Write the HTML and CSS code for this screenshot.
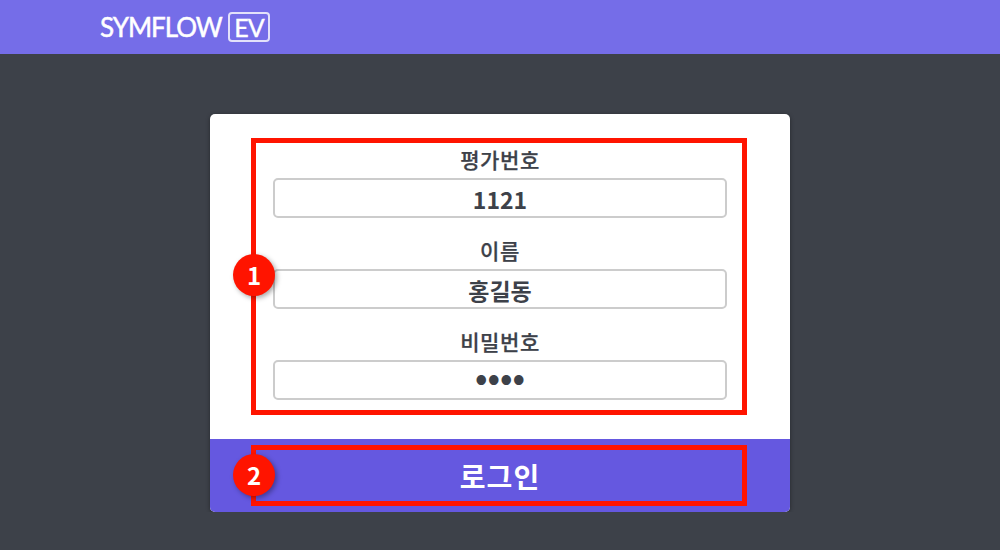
FILE: index.html
```html
<!DOCTYPE html>
<html lang="ko">

<head>
	<meta charset="utf-8">
	<title>SYMFLOW EV 로그인</title>
	<link rel="stylesheet" href="styles.css">
</head>

<body>
	<header class="top-bar">
		<div class="logo">
			<span class="logo-name">SYMFLOW</span>
			<span class="logo-tag">EV</span>
		</div>
	</header>

	<main class="login-card">
		<form class="login-form">
			<div class="field">
				<label for="evalNo">평가번호</label>
				<input type="text" id="evalNo" value="1121">
			</div>
			<div class="field">
				<label for="userName">이름</label>
				<input type="text" id="userName" value="홍길동">
			</div>
			<div class="field">
				<label for="userPw">비밀번호</label>
				<input class="pw-input" type="password" id="userPw" value="1234">
			</div>
		</form>
		<button class="login-btn" type="button">로그인</button>

		<!-- 설명용 표시 -->
		<div class="mark mark-form"></div>
		<div class="mark mark-btn"></div>
		<span class="badge badge-form">1</span>
		<span class="badge badge-btn">2</span>
	</main>
</body>

</html>
```

FILE: styles.css
```css
* {
	box-sizing: border-box;
}

body {
	margin: 0;
	background-color: #3d4149;
	font-family: "Noto Sans CJK KR", "Noto Sans", sans-serif;
}

.top-bar {
	display: flex;
	align-items: center;
	height: 54px;
	padding-left: 100px;
	background-color: #756de8;
}

.logo {
	display: flex;
	align-items: center;
	gap: 8px;
	color: #fff;
	font-family: Lato, sans-serif;
}

.logo-name {
	width: 120px;
	font-size: 26px;
	line-height: 30px;
	letter-spacing: -1px;
	white-space: nowrap;
	-webkit-text-stroke: 0.5px #fff;
}

.logo-tag {
	display: block;
	width: 42px;
	height: 30px;
	border: 2px solid #e3e1fa;
	border-radius: 4px;
	font-size: 25px;
	letter-spacing: -1px;
	line-height: 26px;
	text-align: center;
	-webkit-text-stroke: 0.4px #fff;
}

.login-card {
	position: relative;
	width: 580px;
	margin: 60px auto 0;
	border-radius: 5px;
	background-color: #fff;
	box-shadow: 0 1px 4px rgba(0, 0, 0, 0.4);
}

.login-form {
	display: flex;
	flex-direction: column;
	gap: 13px;
	padding: 26px 63px 39px;
}

.field label {
	display: block;
	height: 38px;
	color: #3d4149;
	font-size: 21px;
	font-weight: 500;
	letter-spacing: 0.6px;
	line-height: 38px;
	text-align: center;
	-webkit-text-stroke: 0.25px #3d4149;
}

.field input {
	display: block;
	width: 100%;
	height: 40px;
	padding: 1px 10px 0;
	border: 2px solid #ccc;
	border-radius: 5px;
	color: #3d4149;
	font-family: inherit;
	font-size: 23px;
	font-weight: 700;
	text-align: center;
}

.field .pw-input {
	padding: 0 10px 9px;
	font-size: 33px;
}

.login-btn {
	display: block;
	width: 100%;
	height: 73px;
	border: none;
	border-radius: 0 0 5px 5px;
	background-color: #6558e0;
	color: #fff;
	font-family: inherit;
	font-size: 28px;
	font-weight: 700;
	letter-spacing: 1px;
}

.mark {
	position: absolute;
	left: 41px;
	width: 496px;
	border: 5px solid #ff1400;
}

.mark-form {
	top: 24px;
	height: 277px;
}

.mark-btn {
	top: 331px;
	height: 61px;
}

.badge {
	position: absolute;
	left: 23px;
	width: 42px;
	height: 42px;
	border-radius: 50%;
	background-color: #ff1400;
	box-shadow: 2px 2px 5px rgba(0, 0, 0, 0.35);
	color: #fff;
	font-size: 24px;
	font-weight: 700;
	line-height: 42px;
	text-align: center;
}

.badge-form {
	top: 140px;
}

.badge-btn {
	top: 340px;
}
```
